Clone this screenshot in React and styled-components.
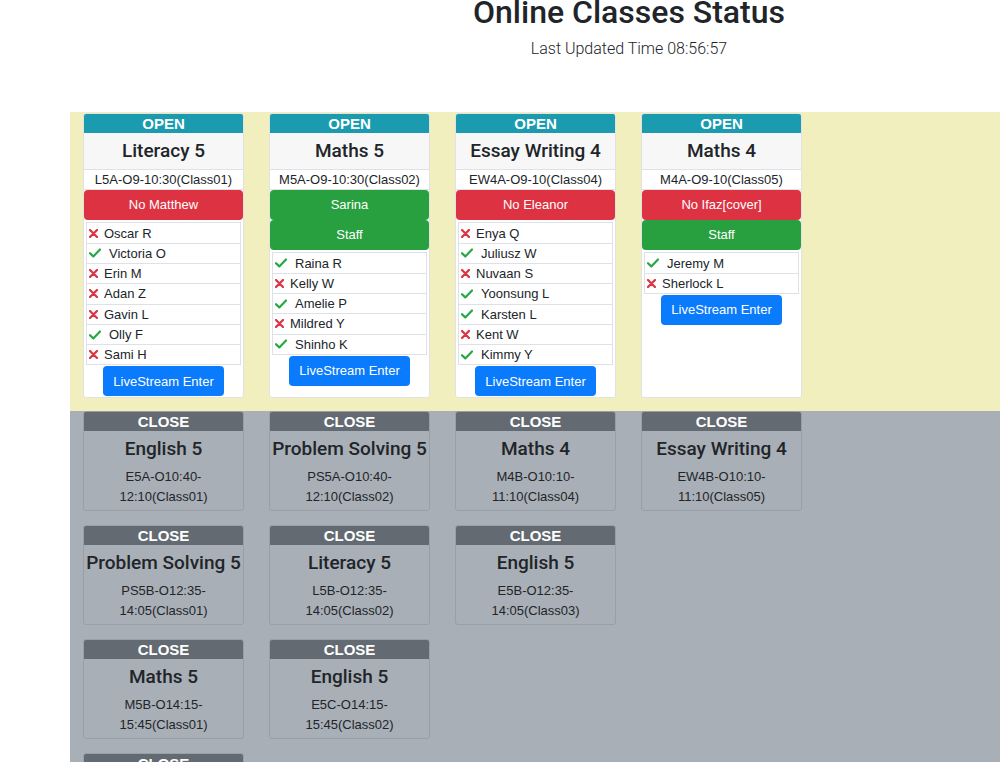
import React from 'react';
import styled, { createGlobalStyle } from 'styled-components';

const Global = createGlobalStyle`
  html, body { margin: 0; padding: 0; overflow: hidden; background: #fff; }
  body { font-family: "Liberation Sans", Arial, sans-serif; color: #212529; }
`;

const Page = styled.div`
  width: 1258px;
`;

const Header = styled.header`
  text-align: center;
  margin-bottom: 51px;
`;

const Title = styled.h2`
  margin: -7px 0 6px;
  font-family: Roboto, "Liberation Sans", Arial, sans-serif;
  font-size: 32px;
  line-height: 1.2;
  font-weight: 500;
`;

const Updated = styled.p`
  margin: 0;
  font-family: Roboto, "Liberation Sans", Arial, sans-serif;
  font-size: 16px;
  line-height: 24px;
  font-weight: 300;
`;

const Section = styled.section`
  margin: 0 70px;
  display: flex;
  gap: 25px;
  padding: ${p => (p.open ? '1px 13px 13px' : '0 13px 40px')};
  background: ${p => (p.open ? '#f2efbf' : '#a9afb6')};
  align-items: ${p => (p.open ? 'stretch' : 'flex-start')};
`;

const Column = styled.div`
  display: flex;
  flex-direction: column;
  gap: 14px;
  width: 161px;
`;

const Card = styled.div`
  width: 161px;
  box-sizing: border-box;
  display: flex;
  flex-direction: column;
  border: 1px solid ${p => (p.open ? '#e2e2e2' : '#999fa6')};
  border-radius: 3px;
  background: ${p => (p.open ? '#fff' : 'transparent')};
  padding-bottom: ${p => (p.open ? '1px' : '3px')};
  overflow: hidden;
`;

const Status = styled.div`
  height: 19px;
  line-height: 19px;
  text-align: center;
  color: #fff;
  font-weight: 700;
  font-size: 15px;
  background: ${p => (p.open ? '#1a9bb0' : '#636a72')};
`;

const Subject = styled.div`
  padding: 6px 0;
  font-family: Roboto, "Liberation Sans", Arial, sans-serif;
  font-size: 19px;
  font-weight: 500;
  line-height: 24px;
  text-align: center;
  white-space: nowrap;
  background: ${p => (p.open ? '#f7f7f7' : 'transparent')};
`;

const Code = styled.div`
  font-size: 13px;
  text-align: center;
  line-height: ${p => (p.open ? '19px' : '20px')};
  padding: ${p => (p.open ? '0' : '0 9px')};
  border-top: ${p => (p.open ? '1px solid #dee2e6' : 'none')};
  border-bottom: ${p => (p.open ? '1px solid #dee2e6' : 'none')};
`;

const Teacher = styled.div`
  height: 30px;
  line-height: 30px;
  text-align: center;
  font-size: 13px;
  color: #fff;
  border-radius: 4px;
  background: ${p => (p.ok ? '#28a040' : '#dc3242')};
`;

const List = styled.ul`
  list-style: none;
  margin: 2px 2px 0;
  padding: 0;
  border: 1px solid #dee2e6;
`;

const Student = styled.li`
  display: flex;
  align-items: center;
  height: 19.3px;
  padding-left: 2px;
  font-size: 13px;
  border-bottom: 1px solid #dee2e6;
  &:last-child { border-bottom: none; }
`;

const Mark = styled.svg`
  flex: none;
  margin-right: ${p => (p.ok ? '8px' : '6px')};
`;

const Enter = styled.button`
  align-self: center;
  margin-top: 1px;
  height: 30px;
  padding: 0 10px;
  border: none;
  border-radius: 4px;
  background: #0a7bfc;
  color: #fff;
  font-family: inherit;
  font-size: 13px;
`;

const Cross = () => (
  <Mark width="9" height="9" viewBox="0 0 9 9">
    <path d="M1 1L8 8M8 1L1 8" stroke="#dc3545" strokeWidth="2.3" strokeLinecap="round" />
  </Mark>
);

const Check = () => (
  <Mark ok width="12" height="10" viewBox="0 0 12 10">
    <path d="M1 5.2L4.3 8.4L11 1.5" fill="none" stroke="#28a745" strokeWidth="2.2" strokeLinecap="round" strokeLinejoin="round" />
  </Mark>
);

const openClasses = [
  {
    subject: 'Literacy 5', code: 'L5A-O9-10:30(Class01)',
    teachers: [{ name: 'No Matthew', ok: false }],
    students: [['Oscar R', 0], ['Victoria O', 1], ['Erin M', 0], ['Adan Z', 0], ['Gavin L', 0], ['Olly F', 1], ['Sami H', 0]],
  },
  {
    subject: 'Maths 5', code: 'M5A-O9-10:30(Class02)',
    teachers: [{ name: 'Sarina', ok: true }, { name: 'Staff', ok: true }],
    students: [['Raina R', 1], ['Kelly W', 0], ['Amelie P', 1], ['Mildred Y', 0], ['Shinho K', 1]],
  },
  {
    subject: 'Essay Writing 4', code: 'EW4A-O9-10(Class04)',
    teachers: [{ name: 'No Eleanor', ok: false }],
    students: [['Enya Q', 0], ['Juliusz W', 1], ['Nuvaan S', 0], ['Yoonsung L', 1], ['Karsten L', 1], ['Kent W', 0], ['Kimmy Y', 1]],
  },
  {
    subject: 'Maths 4', code: 'M4A-O9-10(Class05)',
    teachers: [{ name: 'No Ifaz[cover]', ok: false }, { name: 'Staff', ok: true }],
    students: [['Jeremy M', 1], ['Sherlock L', 0]],
  },
];

const closedColumns = [
  [
    ['English 5', 'E5A-O10:40-12:10(Class01)'],
    ['Problem Solving 5', 'PS5B-O12:35-14:05(Class01)'],
    ['Maths 5', 'M5B-O14:15-15:45(Class01)'],
    ['Literacy 5', 'L5C-O16:00-17:30(Class01)'],
  ],
  [
    ['Problem Solving 5', 'PS5A-O10:40-12:10(Class02)'],
    ['Literacy 5', 'L5B-O12:35-14:05(Class02)'],
    ['English 5', 'E5C-O14:15-15:45(Class02)'],
  ],
  [
    ['Maths 4', 'M4B-O10:10-11:10(Class04)'],
    ['English 5', 'E5B-O12:35-14:05(Class03)'],
  ],
  [
    ['Essay Writing 4', 'EW4B-O10:10-11:10(Class05)'],
  ],
];

const OpenCard = ({ subject, code, teachers, students }) => (
  <Card open>
    <Status open>OPEN</Status>
    <Subject open>{subject}</Subject>
    <Code open>{code}</Code>
    {teachers.map((t, i) => <Teacher key={i} ok={t.ok}>{t.name}</Teacher>)}
    <List>
      {students.map(([name, ok]) => (
        <Student key={name}>{ok ? <Check /> : <Cross />}{name}</Student>
      ))}
    </List>
    <Enter>LiveStream Enter</Enter>
  </Card>
);

const ClosedCard = ({ subject, code }) => (
  <Card>
    <Status>CLOSE</Status>
    <Subject>{subject}</Subject>
    <Code>{code}</Code>
  </Card>
);

export default function App() {
  return (
    <Page>
      <Global />
      <Header>
        <Title>Online Classes Status</Title>
        <Updated>Last Updated Time 08:56:57</Updated>
      </Header>
      <Section open>
        {openClasses.map(c => <OpenCard key={c.code} {...c} />)}
      </Section>
      <Section>
        {closedColumns.map((col, i) => (
          <Column key={i}>
            {col.map(([s, c]) => <ClosedCard key={c} subject={s} code={c} />)}
          </Column>
        ))}
      </Section>
    </Page>
  );
}
